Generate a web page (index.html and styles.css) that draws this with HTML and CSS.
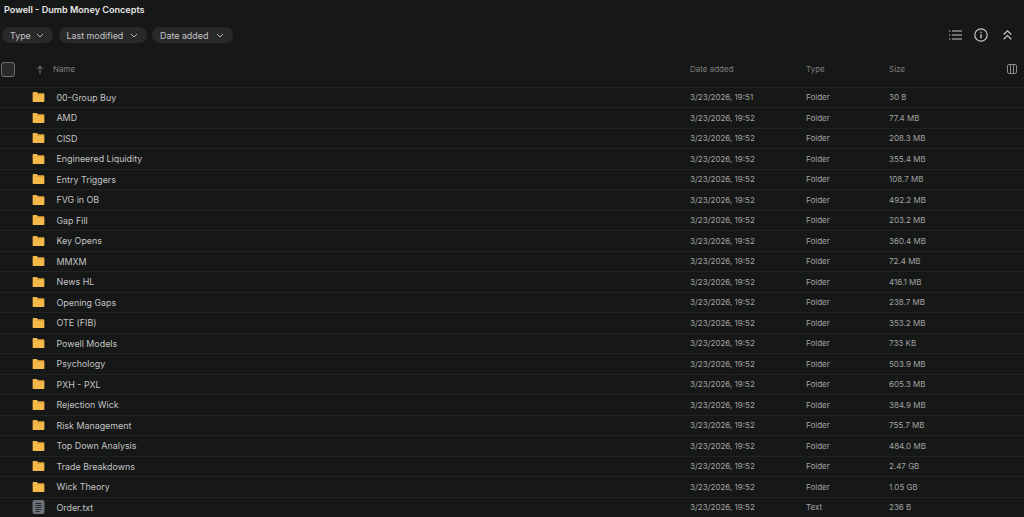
FILE: index.html
```html
<!DOCTYPE html>
<html>
<head>
<meta charset="utf-8">
<title>Powell - Dumb Money Concepts</title>
<link rel="stylesheet" href="styles.css">
</head>
<body>
<svg class="defs" width="0" height="0">
	<symbol id="folder" viewBox="-0.5 -0.5 14 13">
		<path d="M1.2 0.5H4.6L6.2 2.2H11.8C12.4 2.2 12.8 2.6 12.8 3.2V10.5C12.8 11.1 12.4 11.5 11.8 11.5H1.2C0.6 11.5 0.2 11.1 0.2 10.5V1.5C0.2 0.9 0.6 0.5 1.2 0.5Z" fill="#f5b94a"/>
		<path d="M0.2 3.6H12.8V3.2C12.8 2.6 12.4 2.2 11.8 2.2H6.2L5 3Z" fill="#dd9f33"/>
	</symbol>
	<symbol id="chev" viewBox="0 0 8 5">
		<path d="M1 1L4 4L7 1" fill="none" stroke="#b4b4b4" stroke-width="1"/>
	</symbol>
</svg>

<div class="title">Powell - Dumb Money Concepts</div>

<div class="toolbar">
	<div class="chips">
		<div class="chip chip_type">Type <svg class="chev"><use href="#chev"/></svg></div>
		<div class="chip chip_mod">Last modified <svg class="chev"><use href="#chev"/></svg></div>
		<div class="chip chip_date">Date added <svg class="chev"><use href="#chev"/></svg></div>
	</div>
	<div class="tools">
		<svg class="tool" width="13" height="10" viewBox="0 0 13 10" fill="none" stroke="#c8c8c8" stroke-width="1.2">
			<path d="M0 1H1.4M3 1H13M0 5H1.4M3 5H13M0 9H1.4M3 9H13"/>
		</svg>
		<svg class="tool" width="14" height="14" viewBox="0 0 14 14" fill="none" stroke="#c8c8c8" stroke-width="1.2">
			<circle cx="7" cy="7" r="6.2"/>
			<path d="M7 6.2V10.2" stroke-width="1.4"/>
			<circle cx="7" cy="4.2" r="0.8" fill="#c8c8c8" stroke="none"/>
		</svg>
		<svg class="tool tool_up" width="9" height="10" viewBox="0 0 9 10" fill="none" stroke="#c8c8c8" stroke-width="1.2">
			<path d="M0.7 4.5L4.5 0.8L8.3 4.5M0.7 9.2L4.5 5.5L8.3 9.2"/>
		</svg>
	</div>
</div>

<div class="list">
	<div class="row head">
		<div class="check"><span class="box"></span></div>
		<div class="arrow">
			<svg width="8" height="9" viewBox="0 0 8 9" fill="none" stroke="#7c7c7c" stroke-width="1"><path d="M4 9V1M1 4L4 1L7 4"/></svg>
		</div>
		<div class="name">Name</div>
		<div class="date">Date added</div>
		<div class="type">Type</div>
		<div class="size">Size</div>
		<div class="cols">
			<svg width="10" height="10" viewBox="0 0 10 10" fill="none" stroke="#8a8a8a" stroke-width="1"><rect x="0.5" y="0.5" width="9" height="9" rx="1.5"/><path d="M3.5 0.5V9.5M6.5 0.5V9.5"/></svg>
		</div>
	</div>

	<div class="row"><div class="check"></div><svg class="icon"><use href="#folder"/></svg><div class="name">00-Group Buy</div><div class="date">3/23/2026, 19:51</div><div class="type">Folder</div><div class="size">30 B</div></div>
	<div class="row"><div class="check"></div><svg class="icon"><use href="#folder"/></svg><div class="name">AMD</div><div class="date">3/23/2026, 19:52</div><div class="type">Folder</div><div class="size">77.4 MB</div></div>
	<div class="row"><div class="check"></div><svg class="icon"><use href="#folder"/></svg><div class="name">CISD</div><div class="date">3/23/2026, 19:52</div><div class="type">Folder</div><div class="size">208.3 MB</div></div>
	<div class="row"><div class="check"></div><svg class="icon"><use href="#folder"/></svg><div class="name">Engineered Liquidity</div><div class="date">3/23/2026, 19:52</div><div class="type">Folder</div><div class="size">355.4 MB</div></div>
	<div class="row"><div class="check"></div><svg class="icon"><use href="#folder"/></svg><div class="name">Entry Triggers</div><div class="date">3/23/2026, 19:52</div><div class="type">Folder</div><div class="size">108.7 MB</div></div>
	<div class="row"><div class="check"></div><svg class="icon"><use href="#folder"/></svg><div class="name">FVG in OB</div><div class="date">3/23/2026, 19:52</div><div class="type">Folder</div><div class="size">492.2 MB</div></div>
	<div class="row"><div class="check"></div><svg class="icon"><use href="#folder"/></svg><div class="name">Gap Fill</div><div class="date">3/23/2026, 19:52</div><div class="type">Folder</div><div class="size">203.2 MB</div></div>
	<div class="row"><div class="check"></div><svg class="icon"><use href="#folder"/></svg><div class="name">Key Opens</div><div class="date">3/23/2026, 19:52</div><div class="type">Folder</div><div class="size">360.4 MB</div></div>
	<div class="row"><div class="check"></div><svg class="icon"><use href="#folder"/></svg><div class="name">MMXM</div><div class="date">3/23/2026, 19:52</div><div class="type">Folder</div><div class="size">72.4 MB</div></div>
	<div class="row"><div class="check"></div><svg class="icon"><use href="#folder"/></svg><div class="name">News HL</div><div class="date">3/23/2026, 19:52</div><div class="type">Folder</div><div class="size">416.1 MB</div></div>
	<div class="row"><div class="check"></div><svg class="icon"><use href="#folder"/></svg><div class="name">Opening Gaps</div><div class="date">3/23/2026, 19:52</div><div class="type">Folder</div><div class="size">238.7 MB</div></div>
	<div class="row"><div class="check"></div><svg class="icon"><use href="#folder"/></svg><div class="name">OTE (FIB)</div><div class="date">3/23/2026, 19:52</div><div class="type">Folder</div><div class="size">353.2 MB</div></div>
	<div class="row"><div class="check"></div><svg class="icon"><use href="#folder"/></svg><div class="name">Powell Models</div><div class="date">3/23/2026, 19:52</div><div class="type">Folder</div><div class="size">733 KB</div></div>
	<div class="row"><div class="check"></div><svg class="icon"><use href="#folder"/></svg><div class="name">Psychology</div><div class="date">3/23/2026, 19:52</div><div class="type">Folder</div><div class="size">503.9 MB</div></div>
	<div class="row"><div class="check"></div><svg class="icon"><use href="#folder"/></svg><div class="name">PXH - PXL</div><div class="date">3/23/2026, 19:52</div><div class="type">Folder</div><div class="size">605.3 MB</div></div>
	<div class="row"><div class="check"></div><svg class="icon"><use href="#folder"/></svg><div class="name">Rejection Wick</div><div class="date">3/23/2026, 19:52</div><div class="type">Folder</div><div class="size">384.9 MB</div></div>
	<div class="row"><div class="check"></div><svg class="icon"><use href="#folder"/></svg><div class="name">Risk Management</div><div class="date">3/23/2026, 19:52</div><div class="type">Folder</div><div class="size">755.7 MB</div></div>
	<div class="row"><div class="check"></div><svg class="icon"><use href="#folder"/></svg><div class="name">Top Down Analysis</div><div class="date">3/23/2026, 19:52</div><div class="type">Folder</div><div class="size">484.0 MB</div></div>
	<div class="row"><div class="check"></div><svg class="icon"><use href="#folder"/></svg><div class="name">Trade Breakdowns</div><div class="date">3/23/2026, 19:52</div><div class="type">Folder</div><div class="size">2.47 GB</div></div>
	<div class="row"><div class="check"></div><svg class="icon"><use href="#folder"/></svg><div class="name">Wick Theory</div><div class="date">3/23/2026, 19:52</div><div class="type">Folder</div><div class="size">1.05 GB</div></div>
	<div class="row"><div class="check"></div>
		<svg class="icon" viewBox="0 0 13 14">
			<rect x="0.5" y="0" width="12" height="14" rx="2" fill="#6e7079"/>
			<path d="M3.5 3.5H9.5M3.5 5.5H9.5M3.5 7.5H9.5M3.5 9.5H9.5M3.5 11.5H7.5" stroke="#2b2c30" stroke-width="1"/>
		</svg>
		<div class="name">Order.txt</div><div class="date">3/23/2026, 19:52</div><div class="type">Text</div><div class="size">236 B</div></div>
</div>
</body>
</html>
```

FILE: styles.css
```css
html, body {
	margin: 0;
	padding: 0;
	height: 517px;
	overflow: hidden;
}
body {
	background-color: #161717;
	color: #c9c9c9;
	font-family: Inter, "Liberation Sans", sans-serif;
	font-size: 8.9px;
}
.defs {
	position: absolute;
}
.title {
	padding: 4px 0 0 4px;
	height: 14px;
	line-height: 11px;
	font-size: 9.1px;
	font-weight: 600;
	color: #e6e6e6;
}
.toolbar {
	display: flex;
	justify-content: space-between;
	align-items: center;
	margin-top: 9px;
	height: 16px;
	padding: 0 12.5px 0 2px;
}
.chips {
	display: flex;
	gap: 5.5px;
}
.chip {
	display: flex;
	align-items: center;
	justify-content: space-between;
	box-sizing: border-box;
	height: 16px;
	padding: 0 9px 0 8px;
	border-radius: 8px;
	background-color: #29292b;
	color: #c4c4c4;
	font-size: 8.9px;
}
.chip_type {
	width: 51px;
}
.chip_mod {
	width: 88px;
}
.chip_date {
	width: 81px;
}
.chev {
	width: 8px;
	height: 5px;
}
.tools {
	display: flex;
	align-items: center;
	gap: 12px;
}
.tool_up {
	margin-left: 2.5px;
}
.list {
	margin-top: 17.5px;
}
.row {
	display: flex;
	align-items: center;
	box-sizing: border-box;
	height: 20.5px;
	border-top: 1px solid #212222;
	color: #c4c4c4;
}
.head {
	height: 20px;
	margin-top: -1.5px;
	margin-bottom: 7.5px;
	border-top: 0;
	color: #7f7f7f;
	font-size: 8px;
}
.check {
	width: 32px;
	flex: none;
	display: flex;
	align-items: center;
	padding-left: 1px;
	box-sizing: border-box;
}
.box {
	display: block;
	box-sizing: border-box;
	width: 14px;
	height: 15px;
	border: 1px solid #6f6f6f;
	border-radius: 3px;
	background-color: #2a2a2c;
}
.arrow {
	width: 21px;
	flex: none;
	display: flex;
	padding-left: 4px;
	box-sizing: border-box;
}
.icon {
	width: 13px;
	height: 14px;
	flex: none;
	margin-right: 11.5px;
}
.name {
	width: 633.5px;
	flex: none;
}
.head .name {
	width: 637px;
}
.date {
	width: 116px;
	flex: none;
	font-size: 8px;
	color: #a3a3a3;
}
.type {
	width: 83px;
	flex: none;
	font-size: 8px;
	color: #a3a3a3;
}
.size {
	width: 117px;
	flex: none;
	font-size: 8px;
	color: #a3a3a3;
}
.head .date, .head .type, .head .size {
	color: #7f7f7f;
}
.cols {
	display: flex;
	margin-left: 1px;
}
```
